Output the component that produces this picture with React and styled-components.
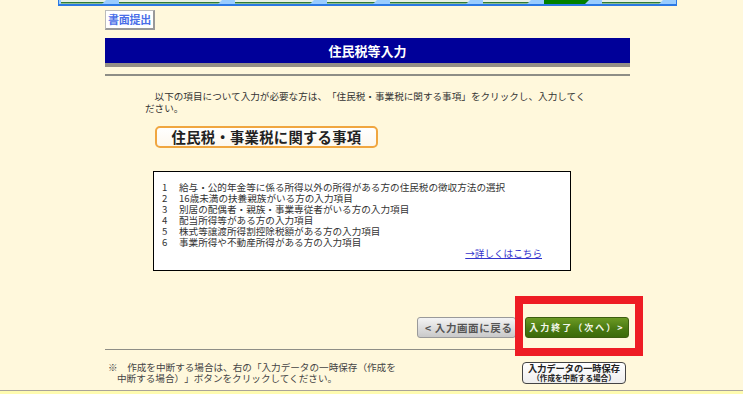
import styled, { createGlobalStyle } from "styled-components";

const GlobalStyle = createGlobalStyle`
  html, body {
    margin: 0;
    padding: 0;
    background: #fff8dc;
    font-family: "Noto Sans CJK JP", "Liberation Sans", sans-serif;
    color: #333;
    overflow: hidden;
    text-spacing-trim: space-all;
  }
`;

const tabs = [
  { w: 45 }, { w: 103 }, { w: 79 }, { w: 50 }, { w: 80 }, { w: 48 }, { w: 45, active: true }, { w: 61 },
];

const topics = [
  "給与・公的年金等に係る所得以外の所得がある方の住民税の徴収方法の選択",
  "16歳未満の扶養親族がいる方の入力項目",
  "別居の配偶者・親族・事業専従者がいる方の入力項目",
  "配当所得等がある方の入力項目",
  "株式等譲渡所得割控除税額がある方の入力項目",
  "事業所得や不動産所得がある方の入力項目",
];

const Frame = styled.div`
  width: 735px;
`;

const TabBar = styled.div`
  width: 615px;
  height: 4px;
  margin: 0 auto;
  display: flex;
  gap: 13px;
  padding-left: 2px;
  background: #9cf;
  border: 1px solid #2a78e4;
  border-top: none;
  border-bottom-width: 2px;
  box-sizing: content-box;
  overflow: hidden;
`;

const Tab = styled.div`
  width: ${(p) => p.$w}px;
  height: 4px;
  flex: none;
  clip-path: polygon(0 0, 100% 0, calc(100% - 4px) 100%, 0 100%);
  background: ${(p) =>
    p.$active
      ? "#008000"
      : "linear-gradient(#e6f0e6 0 2px, #2f7a3a 2px 3px, #8fc08f 3px 4px)"};
`;

const Content = styled.div`
  width: 525px;
  margin: 0 auto;
  display: flex;
  flex-direction: column;
`;

const SubmitButton = styled.div`
  align-self: flex-start;
  margin-top: 4px;
  height: 17px;
  width: 47px;
  display: flex;
  align-items: center;
  justify-content: center;
  background: #fff;
  border: 1px solid #bbb;
  border-right: 2px solid #999;
  border-bottom: 2px solid #999;
  color: #4a6ee8;
  font-size: 11px;
  font-weight: 700;
  line-height: 1;
  letter-spacing: -0.3px;
`;

const Header = styled.div`
  margin-top: 8px;
  height: 25px;
  background: #000099;
  border-bottom: 4px solid #948f86;
  display: flex;
  align-items: center;
  justify-content: center;
  color: #fff;
  font-size: 13px;
  font-weight: 700;
`;

const Rule = styled.div`
  margin-top: ${(p) => p.$top}px;
  height: ${(p) => p.$h}px;
  background: #8e8e86;
`;

const Lead = styled.p`
  margin: 14px 0 0 40px;
  width: 444px;
  text-indent: 9.6px;
  font-size: 9.6px;
  line-height: 12px;
  color: #333;
`;

const TopicButton = styled.div`
  margin: 12px 0 0 50px;
  width: 219px;
  height: 18px;
  border: 2px solid #f0a640;
  border-radius: 5px;
  background: linear-gradient(#ffffff, #fdf8ee);
  display: flex;
  align-items: center;
  justify-content: center;
  font-size: 14.3px;
  font-weight: 700;
  letter-spacing: 0.3px;
  color: #222;
  line-height: 1;
`;

const InfoBox = styled.div`
  margin: 23px 0 0 48px;
  border: 1px solid #000;
  background: #fff;
  padding: 10px 28px 0 8px;
  box-sizing: content-box;
  width: 380px;
  height: 88px;
  display: flex;
  flex-direction: column;
`;

const TopicList = styled.ol`
  margin: 0;
  padding: 0;
  list-style: none;
`;

const TopicItem = styled.li`
  display: flex;
  font-size: 9.6px;
  line-height: 11px;
  color: #333;
`;

const Num = styled.span`
  width: 17px;
  flex: none;
`;

const MoreLink = styled.a`
  align-self: flex-end;
  font-size: 9.6px;
  line-height: 11px;
  color: #3333cc;
  text-decoration: underline;
`;

const ActionRow = styled.div`
  margin-top: 46px;
  margin-right: 1px;
  display: flex;
  justify-content: flex-end;
  gap: 9px;
`;

const BackButton = styled.div`
  width: 99px;
  height: 21px;
  box-sizing: border-box;
  border: 1px solid #9a9a9a;
  border-radius: 3px;
  background: linear-gradient(#f4f4f4, #c9c9c9);
  display: flex;
  align-items: center;
  padding-left: 7px;
  font-size: 10.5px;
  font-weight: 700;
  letter-spacing: 0.6px;
  color: #555;
  white-space: nowrap;
  overflow: hidden;
`;

const NextWrap = styled.div`
  position: relative;
`;

const NextButton = styled.div`
  width: 104px;
  height: 21px;
  box-sizing: border-box;
  border: 1px solid #3d5e10;
  border-radius: 3px;
  background: linear-gradient(#6c9a24, #4a7a12 55%, #3c6a0a);
  display: flex;
  align-items: center;
  justify-content: center;
  font-size: 9px;
  font-weight: 700;
  letter-spacing: 2px;
  color: #f4f8ec;
  white-space: nowrap;
`;

const Highlight = styled.div`
  position: absolute;
  left: -10px;
  top: -21px;
  right: -14px;
  bottom: -18px;
  border: 8px solid #ee1c24;
  pointer-events: none;
`;

const NoteRow = styled.div`
  margin-top: 12px;
  display: flex;
  justify-content: space-between;
  align-items: flex-start;
`;

const Note = styled.p`
  margin: 0;
  padding-left: 12px;
  text-indent: -9px;
  font-size: 9.6px;
  line-height: 11px;
  color: #444;
`;

const SaveButton = styled.div`
  margin-right: 4px;
  width: 104px;
  height: 22px;
  box-sizing: border-box;
  border: 1px solid #444;
  border-radius: 4px;
  background: linear-gradient(#ffffff, #eeeeee);
  display: flex;
  flex-direction: column;
  align-items: center;
  justify-content: center;
  color: #222;
  line-height: 10px;
`;

const SaveMain = styled.span`
  font-size: 9.2px;
  font-weight: 700;
`;

const SaveSub = styled.span`
  font-size: 7.6px;
  font-weight: 700;
`;

const Footer = styled.div`
  margin-top: 6px;
  height: 10px;
  border-top: 1px solid #a9a49a;
  background: #fffcb0;
`;

export default function App() {
  return (
    <>
      <GlobalStyle />
      <Frame>
        <TabBar>
          {tabs.map((t, i) => (
            <Tab key={i} $w={t.w} $active={t.active} />
          ))}
        </TabBar>
        <Content>
          <SubmitButton>書面提出</SubmitButton>
          <Header>住民税等入力</Header>
          <Rule $top={7} $h={2} />
          <Lead>
            以下の項目について入力が必要な方は、「住民税・事業税に関する事項」をクリックし、入力してください。
          </Lead>
          <TopicButton>住民税・事業税に関する事項</TopicButton>
          <InfoBox>
            <TopicList>
              {topics.map((t, i) => (
                <TopicItem key={i}>
                  <Num>{i + 1}</Num>
                  {t}
                </TopicItem>
              ))}
            </TopicList>
            <MoreLink href="#">→詳しくはこちら</MoreLink>
          </InfoBox>
          <ActionRow>
            <BackButton>&lt; 入力画面に戻る</BackButton>
            <NextWrap>
              <NextButton>入力終了（次へ）&gt;</NextButton>
              <Highlight />
            </NextWrap>
          </ActionRow>
          <Rule $top={11} $h={1} />
          <NoteRow>
            <Note>
              ※　作成を中断する場合は、右の「入力データの一時保存（作成を
              <br />
              中断する場合）」ボタンをクリックしてください。
            </Note>
            <SaveButton>
              <SaveMain>入力データの一時保存</SaveMain>
              <SaveSub>（作成を中断する場合）</SaveSub>
            </SaveButton>
          </NoteRow>
        </Content>
      </Frame>
      <Footer />
    </>
  );
}
